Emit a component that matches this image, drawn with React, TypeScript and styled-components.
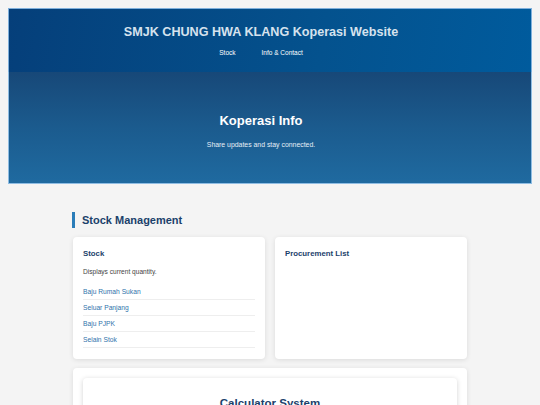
import React from 'react';
import styled, { createGlobalStyle } from 'styled-components';

const GlobalStyle = createGlobalStyle`
  body {
    margin: 8px;
    background: #f4f4f4;
    font-family: "Liberation Sans", Arial, sans-serif;
  }
  * { box-sizing: border-box; }
`;

const Header = styled.header`
  background: linear-gradient(100deg, #053f7a 0%, #04528e 60%, #005b9d 100%);
  border: 1px solid #7fb0dc;
  border-bottom: none;
  height: 64px;
  padding: 15px 18px 0 0;
  text-align: center;
`;

const SiteTitle = styled.h1`
  margin: 0;
  font-size: 12.6px;
  font-weight: bold;
  color: #d6e2ee;
  line-height: 16px;
`;

const Nav = styled.nav`
  display: flex;
  justify-content: center;
  gap: 26px;
  margin-top: 9px;
`;

const NavLink = styled.a`
  font-size: 6.5px;
  color: #ffffff;
  text-decoration: none;
`;

const Hero = styled.section`
  background: linear-gradient(180deg, #174878 0%, #1b5b8e 50%, #1f6aa0 100%);
  border: 1px solid #8fbde3;
  border-top: none;
  height: 112px;
  display: flex;
  flex-direction: column;
  align-items: center;
  justify-content: center;
  padding: 6px 18px 0 0;
`;

const HeroTitle = styled.h2`
  margin: 0;
  font-size: 13px;
  font-weight: bold;
  color: #ffffff;
  line-height: 16px;
`;

const HeroText = styled.p`
  margin: 12px 0 0;
  font-size: 6.9px;
  color: #e6eef6;
`;

const Main = styled.main`
  width: 394px;
  margin: 28px auto 0;
`;

const SectionTitle = styled.h3`
  margin: 0 0 9px -1px;
  border-left: 3px solid #2a7db9;
  padding-left: 7px;
  font-size: 11px;
  line-height: 16px;
  color: #1b416b;
  font-weight: bold;
`;

const Grid = styled.div`
  display: grid;
  grid-template-columns: 1fr 1fr;
  gap: 10px;
`;

const Card = styled.div`
  background: #ffffff;
  border-radius: 4px;
  box-shadow: 0 1px 5px rgba(0, 0, 0, 0.1);
  padding: 12px 10px 10px;
  height: 122px;
`;

const CardTitle = styled.h4`
  margin: 0;
  font-size: 7.8px;
  line-height: 10px;
  color: #1b416b;
  font-weight: bold;
`;

const CardText = styled.p`
  margin: 9px 0 8px;
  font-size: 6.6px;
  line-height: 8px;
  color: #444444;
`;

const ItemList = styled.ul`
  list-style: none;
  margin: 0;
  padding: 0;
`;

const Item = styled.li`
  font-size: 6.7px;
  line-height: 15px;
  color: #2f73ab;
  border-bottom: 1px solid #eeeeee;
`;

const WideCard = styled.div`
  background: #ffffff;
  border-radius: 4px;
  box-shadow: 0 1px 5px rgba(0, 0, 0, 0.1);
  margin-top: 9px;
  padding: 10px 10px 0;
  height: 60px;
`;

const InnerCard = styled.div`
  border-radius: 4px;
  box-shadow: 0 1px 5px rgba(0, 0, 0, 0.18);
  padding-top: 19px;
  text-align: center;
  height: 60px;
`;

const CalcTitle = styled.h3`
  margin: 0;
  font-size: 11.5px;
  color: #1b416b;
  font-weight: bold;
`;

const stockItems = ['Baju Rumah Sukan', 'Seluar Panjang', 'Baju PJPK', 'Selain Stok'];

const App: React.FC = () => {
  return (
    <>
      <GlobalStyle />
      <Header>
        <SiteTitle>SMJK CHUNG HWA KLANG Koperasi Website</SiteTitle>
        <Nav>
          <NavLink href="#">Stock</NavLink>
          <NavLink href="#">Info &amp; Contact</NavLink>
        </Nav>
      </Header>
      <Hero>
        <HeroTitle>Koperasi Info</HeroTitle>
        <HeroText>Share updates and stay connected.</HeroText>
      </Hero>
      <Main>
        <SectionTitle>Stock Management</SectionTitle>
        <Grid>
          <Card>
            <CardTitle>Stock</CardTitle>
            <CardText>Displays current quantity.</CardText>
            <ItemList>
              {stockItems.map((name) => (
                <Item key={name}>{name}</Item>
              ))}
            </ItemList>
          </Card>
          <Card>
            <CardTitle>Procurement List</CardTitle>
          </Card>
        </Grid>
        <WideCard>
          <InnerCard>
            <CalcTitle>Calculator System</CalcTitle>
          </InnerCard>
        </WideCard>
      </Main>
    </>
  );
};

export default App;
